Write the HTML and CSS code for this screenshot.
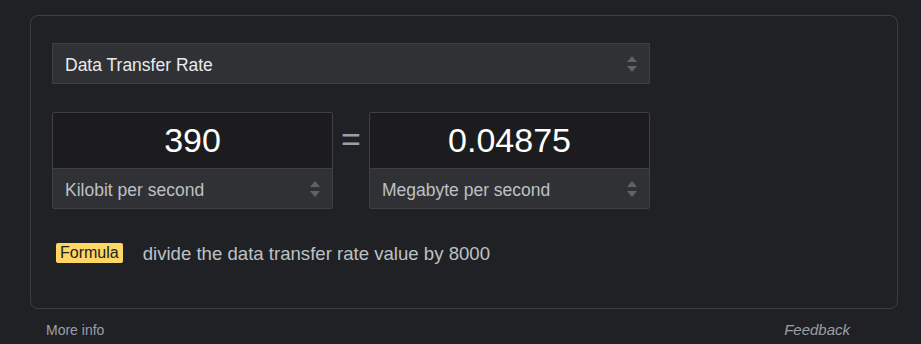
FILE: index.html
```html
<!DOCTYPE html>
<html lang="en">
<head>
    <meta charset="UTF-8">
    <meta name="viewport" content="width=device-width, initial-scale=1.0">
    <title>Unit Converter</title>
    <link rel="stylesheet" href="styles.css">
</head>
<body>
    <div class="card">
        <div class="select main-select">
            <span>Data Transfer Rate</span>
            <svg class="arrows" width="10" height="16" viewBox="0 0 10 16"><path d="M5 0L10 6H0Z M5 16L0 10H10Z" fill="#5f6368"/></svg>
        </div>

        <div class="converter">
            <div class="unit-box">
                <div class="value">390</div>
                <div class="select unit-select">
                    <span>Kilobit per second</span>
                    <svg class="arrows" width="10" height="16" viewBox="0 0 10 16"><path d="M5 0L10 6H0Z M5 16L0 10H10Z" fill="#5f6368"/></svg>
                </div>
            </div>
            <div class="equals">=</div>
            <div class="unit-box">
                <div class="value">0.04875</div>
                <div class="select unit-select">
                    <span>Megabyte per second</span>
                    <svg class="arrows" width="10" height="16" viewBox="0 0 10 16"><path d="M5 0L10 6H0Z M5 16L0 10H10Z" fill="#5f6368"/></svg>
                </div>
            </div>
        </div>

        <div class="formula">
            <span class="badge">Formula</span>
            <span class="formula-text">divide the data transfer rate value by 8000</span>
        </div>
    </div>

    <div class="footer">
        <span>More info</span>
        <span class="feedback">Feedback</span>
    </div>
</body>
</html>
```

FILE: styles.css
```css
body {
    margin: 0;
    padding: 15px 23px 0 30px;
    background-color: #202124;
    font-family: "Liberation Sans", Arial, sans-serif;
    color: #bdc1c6;
}
.card {
    width: 868px;
    height: 294px;
    box-sizing: border-box;
    border: 1px solid #3c4043;
    border-radius: 8px;
    padding: 27px 21px 0 21px;
}
.select {
    display: flex;
    align-items: center;
    justify-content: space-between;
    background-color: #303134;
    box-sizing: border-box;
    font-size: 17.5px;
}
.select span {
    padding-top: 3px;
}
.main-select {
    width: 598px;
    height: 41px;
    padding: 0 12px 0 12px;
    border: 1px solid #3c4043;
    color: #e8eaed;
}
.converter {
    display: flex;
    margin-top: 28px;
    width: 598px;
}
.unit-box {
    width: 281px;
    border: 1px solid #3c4043;
    box-sizing: border-box;
    border-radius: 2px;
    overflow: hidden;
}
.value {
    height: 55px;
    background-color: #1c1c1f;
    color: #ffffff;
    font-size: 34px;
    display: flex;
    align-items: center;
    justify-content: center;
}
.unit-select {
    height: 40px;
    padding: 0 12px 0 12px;
    border-top: 1px solid #3c4043;
}
.equals {
    width: 36px;
    text-align: center;
    font-size: 34px;
    color: #9aa0a6;
    padding-top: 8px;
}
.formula {
    display: flex;
    align-items: center;
    margin-top: 31px;
    padding-left: 4px;
}
.badge {
    background-color: #fdd663;
    color: #202124;
    font-size: 16px;
    padding: 1px 4px 1px 4px;
    border-radius: 2px;
    line-height: 18px;
}
.formula-text {
    font-size: 18.6px;
    margin-left: 20px;
    padding-top: 3px;
}
.footer {
    display: flex;
    justify-content: space-between;
    align-items: baseline;
    width: 804px;
    padding: 12px 0 0 16px;
    font-size: 14px;
    color: #9aa0a6;
}
.feedback {
    font-style: italic;
    font-size: 15px;
}
```
